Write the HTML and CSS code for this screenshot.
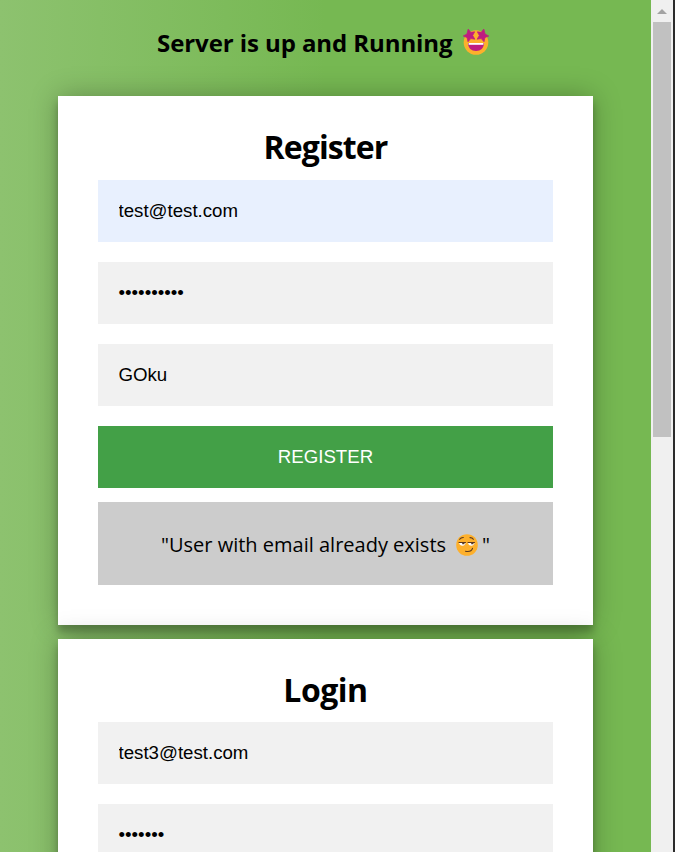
FILE: index.html
```html
<!DOCTYPE html>
<html lang="en">
<head>
<meta charset="utf-8">
<title>Server status</title>
<link rel="stylesheet" href="styles.css">
</head>
<body>
<div class="window">
  <main class="page">
    <h2 class="status"><span class="status-text">Server is up and Running</span>
      <svg class="emoji" viewBox="0 0 26 26" width="26" height="26" role="img" aria-label="Star-struck">
        <circle cx="13" cy="13.5" r="12.3" fill="#fdb02c"/>
        <path d="M5.200 0l2.500 3.300 4-.5-2 3.700 2.200 3.700-4.100-.6-2.800 3.200-1-4.200L.2 7l3.700-1.900zM20.800 0l-2.500 3.300-4-.5 2 3.700-2.200 3.700 4.100-.6 2.800 3.200 1-4.200 3.800-1.600-3.700-1.900z" fill="#bf1d80" stroke="#bf1d80" stroke-width=".7" stroke-linejoin="round"/>
        <path d="M5 14h16c0 5-3.400 8-8 8s-8-3-8-8z" fill="#bf1d80"/>
        <path d="M5.600 14h14.800v1.800H5.600z" fill="#fff"/>
      </svg>
    </h2>
    <section class="card">
      <h1 class="title title-register">Register</h1>
      <form class="form">
        <input class="field autofilled" type="text" value="test@test.com">
        <div class="field">••••••••••</div>
        <input class="field" type="text" value="GOku">
        <button class="submit" type="button">REGISTER</button>
      </form>
      <p class="message"><span class="message-text">"User with email already exists</span>
        <svg class="emoji" viewBox="0 0 22 22" width="22" height="22" role="img" aria-label="Smirk">
          <circle cx="11" cy="11" r="10.800" fill="#fdb02c"/>
          <path d="M3 8.700h6.500c0 2-1.300 3-3 3s-3.200-1-3.500-3zM12 8.700h6.500c-.2 2-1.500 3-3.200 3s-3.100-1-3.300-3z" fill="#fff"/>
          <path d="M3 8.500h6.500M12 8.500h6.500M3.700 5.300q1.300-1.900 3.600-1.800M14 3.600q2.300 0 3.300 1.700M9.500 17.200c3.500.7 6.200-.3 7-2.900" fill="none" stroke="#5b3920" stroke-width="1.100" stroke-linecap="round"/>
          <path d="M6.200 8.700h2.300v1.500H6.200zM15.200 8.700h2.300v1.500h-2.300z" fill="#5b3920"/>
        </svg><span class="quote">"</span>
      </p>
    </section>
    <section class="card">
      <h1 class="title title-login">Login</h1>
      <form class="form">
        <input class="field" type="text" value="test3@test.com">
        <div class="field">•••••••</div>
      </form>
    </section>
  </main>
  <aside class="scrollbar">
    <div class="arrow"></div>
    <div class="thumb"></div>
  </aside>
</div>
</body>
</html>
```
FILE: styles.css
```css
* { box-sizing: border-box; }
body { margin: 0; overflow: hidden; font-family: "Open Sans", "Noto Sans", sans-serif; color: #000; }
.window { display: flex; height: 852px; overflow: hidden; background: #f0f0f0; border-right: 2px solid #2b2b2b; }
.page { width: 651px; flex: none; padding: 0 58px; overflow: hidden; background: linear-gradient(to right, #8dc26f, #76b852 50%); }
.status { height: 96px; margin: 0; padding: 26px 0 0 99px; display: flex; align-items: flex-start; gap: 11px; font-size: 24px; line-height: 34px; white-space: nowrap; }
.status-text { width: 295px; letter-spacing: -0.08px; }
.status .emoji { margin-top: 3px; }
.emoji { flex: none; display: block; }
.card { height: 529px; margin-bottom: 14px; padding: 28px 40px 40px; background: #fff; box-shadow: 0 0 26px rgba(0, 0, 0, .27), 0 7px 7px rgba(0, 0, 0, .24); }
.title { height: 56px; margin: 0; text-align: center; font-size: 32px; line-height: 45px; }
.title-register { letter-spacing: -0.9px; }
.title-login { height: 55px; letter-spacing: -0.5px; }
.form { display: flex; flex-direction: column; gap: 20px; }
.field { width: 100%; height: 62px; border: 0; border-radius: 0; outline: 0; padding: 0 20.500px; background: #f1f1f1; color: #000; font: 18.67px/62px "Liberation Sans", Arial, sans-serif; }
.autofilled { background: #e8f0fe; }
.submit { height: 62px; border: 0; padding: 0; background: #43a047; color: #fff; font: 18.67px "Liberation Sans", Arial, sans-serif; }
.message { height: 83px; margin: 14px 0 0; display: flex; align-items: center; padding: 2px 0 0 63px; background: #ccc; font-size: 20px; white-space: nowrap; }
.message-text { width: 295px; }
.quote { margin-left: 4px; }
.scrollbar { width: 22px; padding-left: 2px; display: flex; flex-direction: column; }
.arrow { width: 10px; height: 5px; margin: 9px 0 8px 4px; background: #a3a3a3; clip-path: polygon(50% 0, 100% 100%, 0 100%); }
.thumb { width: 18px; height: 415px; background: #c1c1c1; }
```
